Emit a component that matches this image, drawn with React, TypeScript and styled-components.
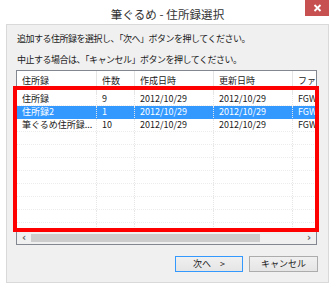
import React from "react";
import styled, { createGlobalStyle } from "styled-components";

const GlobalStyle = createGlobalStyle`
  html, body {
    margin: 0;
    padding: 0;
    background: #ffffff;
  }
  body {
    font-family: "Noto Sans CJK JP", "Noto Sans", sans-serif;
  }
`;

type Row = {
  name: string;
  count: string;
  created: string;
  updated: string;
  file: string;
};

const rows: Row[] = [
  { name: "住所録", count: "9", created: "2012/10/29", updated: "2012/10/29", file: "FGW" },
  { name: "住所録2", count: "1", created: "2012/10/29", updated: "2012/10/29", file: "FGW" },
  { name: "筆ぐるめ住所録...", count: "10", created: "2012/10/29", updated: "2012/10/29", file: "FGW" },
];

const columns = [
  { title: "住所録", width: 80 },
  { title: "件数", width: 38 },
  { title: "作成日時", width: 79 },
  { title: "更新日時", width: 79 },
  { title: "ファイル", width: 60 },
];

const App: React.FunctionComponent = () => {
  const selected = 1;
  const emptyRows = Array.from({ length: 9 });

  return (
    <>
      <GlobalStyle />
      <Window>
        <TitleBar>
          <span />
          <Title>筆ぐるめ - 住所録選択</Title>
          <CloseButton>
            <svg width="9" height="8" viewBox="0 0 9 8">
              <path d="M1.5 1 L7.5 7 M7.5 1 L1.5 7" stroke="#fff" strokeWidth="1.8" />
            </svg>
          </CloseButton>
        </TitleBar>
        <Client>
          <Message>追加する住所録を選択し、「次へ」ボタンを押してください。</Message>
          <Message $gap={7}>中止する場合は、「キャンセル」ボタンを押してください。</Message>
          <ListView>
            <Marker />
            <ListInner>
              <HeaderRow>
                {columns.map((c, i) => (
                  <HeaderCell key={i} $width={c.width}>
                    {c.title}
                  </HeaderCell>
                ))}
              </HeaderRow>
              <Body>
                {rows.map((r, i) => (
                  <DataRow key={i} $selected={i === selected}>
                    <Cell $width={80}>{r.name}</Cell>
                    <Cell $width={38}>{r.count}</Cell>
                    <Cell $width={79}>{r.created}</Cell>
                    <Cell $width={79}>{r.updated}</Cell>
                    <Cell $width={60}>{r.file}</Cell>
                  </DataRow>
                ))}
                {emptyRows.map((_, i) => (
                  <DataRow key={"e" + i} $selected={false}>
                    {columns.map((c, j) => (
                      <Cell key={j} $width={c.width} />
                    ))}
                  </DataRow>
                ))}
              </Body>
              <ScrollBar>
                <ScrollArrow>‹</ScrollArrow>
                <Track>
                  <Thumb />
                </Track>
                <ScrollArrow>›</ScrollArrow>
              </ScrollBar>
            </ListInner>
          </ListView>
          <ButtonRow>
            <Button $default>次へ　&gt;</Button>
            <Button>キャンセル</Button>
          </ButtonRow>
        </Client>
      </Window>
    </>
  );
};

export default App;

const Window = styled.div`
  width: 335px;
  height: 287px;
  background: #ffffff;
  box-sizing: border-box;
  padding: 0 6px 4px 6px;
  display: flex;
  flex-direction: column;
`;

const TitleBar = styled.div`
  height: 24px;
  display: grid;
  grid-template-columns: 1fr auto 1fr;
  align-items: start;
`;

const Title = styled.div`
  font-size: 11.5px;
  line-height: 14px;
  color: #333333;
  padding-top: 7px;
  letter-spacing: 0.1px;
`;

const CloseButton = styled.div`
  justify-self: end;
  width: 24px;
  height: 16px;
  background: #c75050;
  display: flex;
  align-items: center;
  justify-content: center;
`;

const Client = styled.div`
  flex: 1;
  background: #f0f0f0;
  border: 1px solid #d9d9d9;
  display: flex;
  flex-direction: column;
  padding: 7px 10px 0 10px;
`;

const Message = styled.div<{ $gap?: number }>`
  font-size: 9px;
  line-height: 14px;
  color: #1a1a1a;
  margin-top: ${(p) => p.$gap ?? 0}px;
  letter-spacing: -0.5px;
`;

const ListView = styled.div`
  position: relative;
  margin: 3px 1px 0 -1px;
  height: 175px;
`;

const ListInner = styled.div`
  height: 100%;
  box-sizing: border-box;
  border: 1px solid #828790;
  background: #ffffff;
  display: flex;
  flex-direction: column;
  overflow: hidden;
`;

const Marker = styled.div`
  position: absolute;
  left: -3px;
  right: -2px;
  top: 16px;
  height: 146px;
  border: 4px solid #ff0000;
  box-sizing: border-box;
  pointer-events: none;
  z-index: 2;
`;

const HeaderRow = styled.div`
  display: flex;
  height: 22px;
  flex: none;
  background: #ffffff;
`;

const HeaderCell = styled.div<{ $width: number }>`
  flex: none;
  width: ${(p) => p.$width}px;
  box-sizing: border-box;
  border-right: 1px solid #e5e5e5;
  padding-left: 5px;
  font-size: 9px;
  line-height: 20px;
  color: #1a1a1a;
  white-space: nowrap;
  overflow: hidden;
`;

const Body = styled.div`
  flex: 1;
  overflow: hidden;
`;

const DataRow = styled.div<{ $selected: boolean }>`
  display: flex;
  height: 13px;
  background: ${(p) => (p.$selected ? "#3399ff" : "#ffffff")};
  color: ${(p) => (p.$selected ? "#ffffff" : "#1a1a1a")};
  box-sizing: border-box;
  border-bottom: 1px dotted ${(p) => (p.$selected ? "#3399ff" : "#ececec")};
`;

const Cell = styled.div<{ $width: number }>`
  flex: none;
  width: ${(p) => p.$width}px;
  box-sizing: border-box;
  border-right: 1px dotted #e6e6e6;
  padding-left: 5px;
  font-size: 9px;
  line-height: 12px;
  white-space: nowrap;
  overflow: hidden;
`;

const ScrollBar = styled.div`
  flex: none;
  height: 12px;
  display: flex;
  align-items: center;
  background: #f0f0f0;
`;

const ScrollArrow = styled.div`
  width: 14px;
  text-align: center;
  font-family: "DejaVu Sans", sans-serif;
  font-weight: bold;
  font-size: 10px;
  line-height: 12px;
  color: #606060;
`;

const Track = styled.div`
  flex: 1;
  height: 100%;
  display: flex;
  align-items: center;
`;

const Thumb = styled.div`
  width: 229px;
  height: 8px;
  background: #cdcdcd;
`;

const ButtonRow = styled.div`
  display: flex;
  justify-content: flex-end;
  gap: 6px;
  margin-top: 11px;
`;

const Button = styled.div<{ $default?: boolean }>`
  width: ${(p) => (p.$default ? 68 : 69)}px;
  height: 16px;
  box-sizing: border-box;
  border: 1px solid ${(p) => (p.$default ? "#3399ff" : "#acacac")};
  background: linear-gradient(#f0f0f0, #e5e5e5);
  font-size: 9px;
  line-height: 14px;
  text-align: center;
  color: #1a1a1a;
`;
